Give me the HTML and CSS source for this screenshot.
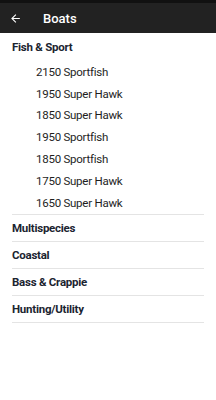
FILE: index.html
```html
<!DOCTYPE html>
<html lang="en">
<head>
    <meta charset="UTF-8">
    <meta name="viewport" content="width=device-width, initial-scale=1.0">
    <title>Boats</title>
    <link rel="stylesheet" href="styles.css">
</head>
<body>
    <div class="status-bar"></div>
    <div class="toolbar">
        <svg class="back" viewBox="0 0 24 24" width="13" height="13">
            <path d="M20 11H7.83l5.59-5.59L12 4l-8 8 8 8 1.41-1.41L7.83 13H20v-2z" fill="#fff"/>
        </svg>
        <span class="title">Boats</span>
    </div>

    <div class="lista">
        <div class="categoria aberta">Fish &amp; Sport</div>
        <div class="item">2150 Sportfish</div>
        <div class="item">1950 Super Hawk</div>
        <div class="item">1850 Super Hawk</div>
        <div class="item">1950 Sportfish</div>
        <div class="item">1850 Sportfish</div>
        <div class="item">1750 Super Hawk</div>
        <div class="item ultimo">1650 Super Hawk</div>

        <div class="categoria">Multispecies</div>
        <div class="categoria">Coastal</div>
        <div class="categoria">Bass &amp; Crappie</div>
        <div class="categoria">Hunting/Utility</div>
    </div>
</body>
</html>
```

FILE: styles.css
```css
body {
    margin: 0;
    padding: 0;
    background: #ffffff;
    font-family: Roboto, sans-serif;
}

.status-bar {
    height: 3px;
    background: #111111;
}

.toolbar {
    height: 30px;
    background: #222222;
    display: flex;
    align-items: center;
    padding-left: 9px;
}

.toolbar .back {
    display: block;
}

.toolbar .title {
    margin-left: 21px;
    color: #ffffff;
    font-weight: 500;
    font-size: 13px;
}

.lista {
    padding: 0 12px;
}

.categoria {
    height: 26px;
    display: flex;
    align-items: center;
    font-size: 11.5px;
    font-weight: bold;
    letter-spacing: -0.25px;
    color: #1b2430;
    border-bottom: 1px solid #e4e4e4;
}

.categoria.aberta {
    height: 28px;
    border-bottom: none;
}

.item {
    height: 21.8px;
    display: flex;
    align-items: center;
    padding-left: 24px;
    font-size: 11.5px;
    letter-spacing: -0.25px;
    color: #1e1e1e;
}

.item.ultimo {
    border-bottom: 1px solid #e4e4e4;
}
```
